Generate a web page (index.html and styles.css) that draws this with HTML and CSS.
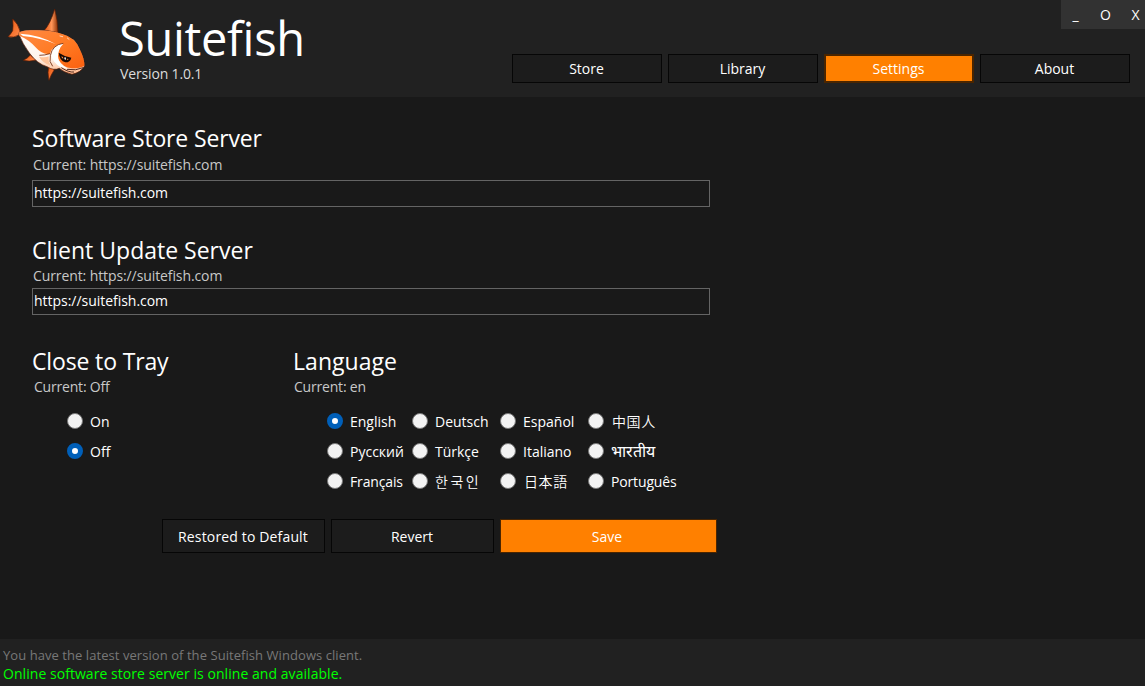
FILE: index.html
```
<!DOCTYPE html>
<html lang="en">
<head>
<meta charset="utf-8">
<title>Suitefish</title>
<link rel="stylesheet" href="styles.css">
</head>
<body>
<header class="header">
  <svg class="logo" viewBox="0 0 300 300" aria-hidden="true">
    <defs>
      <linearGradient id="skin" x1="0" y1="0" x2="1" y2="1"><stop offset="0" stop-color="#ff8a45"/><stop offset=".55" stop-color="#ff7a22"/><stop offset="1" stop-color="#fb6010"/></linearGradient>
      <linearGradient id="fin" x1="0" y1="0" x2="1" y2="0"><stop offset="0" stop-color="#e8560f"/><stop offset=".55" stop-color="#ff9558"/><stop offset="1" stop-color="#8a3005"/></linearGradient>
      <linearGradient id="tail" x1="0" y1="0" x2="1" y2="1"><stop offset="0" stop-color="#e8560f"/><stop offset="1" stop-color="#ff8a4a"/></linearGradient>
      <linearGradient id="belly" x1="0" y1="0" x2="0" y2="1"><stop offset="0" stop-color="#fff"/><stop offset=".65" stop-color="#fff3ea"/><stop offset="1" stop-color="#ffb283"/></linearGradient>
    </defs>
    <g stroke="#5a1a02" stroke-width="2" stroke-linejoin="round">
      <path fill="url(#fin)" d="M132 92Q151 72 164 27Q173 58 174 99Z"/>
      <path fill="url(#tail)" d="M60 93Q55 72 38 57Q40 79 38 92Q32 103 24 110Q42 115 58 104Z"/>
      <path fill="url(#tail)" d="M91 165Q84 174 70 181Q87 186 108 180Z"/>
      <path fill="url(#tail)" d="M147 198Q141 215 147 241Q153 224 163 209Z"/>
      <path fill="url(#belly)" d="M55 99Q66 92 90 91Q150 88 188 103Q226 113 239 148Q254 178 253 199Q242 218 216 223Q191 217 178 205Q161 213 141 200Q112 192 88 159Q68 133 55 99Z"/>
    </g>
    <path fill="url(#skin)" d="M55 98Q66 92 90 91Q150 88 188 103Q226 113 239 148Q254 178 253 197Q240 205 216 205Q188 203 174 176Q169 150 190 130Q158 134 150 161Q128 166 106 141Q87 119 58 107Z"/>
    <path fill="#fff" d="M60 101Q118 104 167 132Q128 115 69 108Z"/>
    <path fill="#fff" d="M190 131Q158 138 154 167Q160 188 180 200L214 211Q186 200 176 181Q169 151 190 131Z"/>
    <path fill="none" stroke="#702505" stroke-width="2.5" d="M118 166Q134 166 150 161M190 130Q157 134 151 167Q146 186 158 199"/>
    <path fill="#ffc49b" d="M117 170Q134 174 146 169Q144 184 151 196Q127 188 117 170Z"/>
    <path fill="#1a0a05" d="M176 158Q194 170 214 173Q211 187 196 187Q179 183 176 158Z"/>
    <path fill="#ff8b3c" d="M184 169l5 2 1 5-4-2zM201 176l5 1-4 4z"/>
    <path fill="#fff" d="M194 171l4 2-1 7-4-3z"/>
    <path fill="none" stroke="#31100a" stroke-width="2.5" d="M184 203Q207 218 222 216M201 208Q228 213 249 203"/>
    <path fill="none" stroke="#fff" stroke-width="2" stroke-linecap="round" d="M180 108l8 2M202 114l5 4"/>
  </svg>
  <div class="brand">
    <h1 class="brand-name">Suitefish</h1>
    <span class="brand-version">Version 1.0.1</span>
  </div>
  <div class="header-end">
    <div class="window-controls"><span>_</span><span>O</span><span>X</span></div>
    <nav class="nav">
      <a class="tab">Store</a>
      <a class="tab">Library</a>
      <a class="tab tab-active">Settings</a>
      <a class="tab">About</a>
    </nav>
  </div>
</header>
<main class="main">
  <section class="server server-store">
    <h2>Software Store Server</h2>
    <p class="current">Current: https://suitefish.com</p>
    <div class="field">https://suitefish.com</div>
  </section>
  <section class="server server-update">
    <h2>Client Update Server</h2>
    <p class="current">Current: https://suitefish.com</p>
    <div class="field">https://suitefish.com</div>
  </section>
  <div class="choices">
    <section class="tray">
      <h2>Close to Tray</h2>
      <p class="current">Current: Off</p>
      <div class="options">
        <label class="option"><i class="radio"></i><span>On</span></label>
        <label class="option"><i class="radio checked"></i><span>Off</span></label>
      </div>
    </section>
    <section class="language">
      <h2>Language</h2>
      <p class="current">Current: en</p>
      <div class="options language-options">
        <label class="option"><i class="radio checked"></i><span>English</span></label>
        <label class="option"><i class="radio"></i><span>Deutsch</span></label>
        <label class="option"><i class="radio"></i><span>Español</span></label>
        <label class="option"><i class="radio"></i><span class="cjk" lang="zh">中国人</span></label>
        <label class="option"><i class="radio"></i><span>Русский</span></label>
        <label class="option"><i class="radio"></i><span>Türkçe</span></label>
        <label class="option"><i class="radio"></i><span>Italiano</span></label>
        <label class="option"><i class="radio"></i><span class="hindi" lang="hi">भारतीय</span></label>
        <label class="option"><i class="radio"></i><span class="tight">Français</span></label>
        <label class="option"><i class="radio"></i><span class="korean" lang="ko">한국인</span></label>
        <label class="option"><i class="radio"></i><span class="cjk" lang="ja">日本語</span></label>
        <label class="option"><i class="radio"></i><span class="tight">Português</span></label>
      </div>
    </section>
  </div>
  <div class="actions">
    <a class="button button-restore">Restored to Default</a>
    <a class="button">Revert</a>
    <a class="button button-save">Save</a>
  </div>
</main>
<footer class="footer">
  <p class="status-version">You have the latest version of the Suitefish Windows client.</p>
  <p class="status-online">Online software store server is online and available.</p>
</footer>
</body>
</html>
```
FILE: styles.css
```
* { box-sizing: border-box; margin: 0; padding: 0; }
body {
  width: 1145px; height: 686px; overflow: hidden;
  display: flex; flex-direction: column;
  background: #191919; color: #fff;
  font: 14px/20px "Open Sans", "Noto Sans CJK SC", sans-serif;
  letter-spacing: 0; white-space: nowrap;
}
h1, h2 { font-weight: 400; }
.header { height: 97px; flex: none; display: flex; background: #212121; }
.logo { width: 100px; height: 100px; flex: none; }
.brand { padding: 12px 0 0 19px; display: flex; flex-direction: column; }
.brand-name { font-size: 47px; line-height: 52px; letter-spacing: -0.3px; }
.brand-version { color: #dcdcdc; line-height: 20px; padding-left: 1px; letter-spacing: -0.15px; }
.header-end { margin-left: auto; display: flex; flex-direction: column; align-items: flex-end; }
.window-controls { width: 84px; height: 29px; background: #323232; display: flex; line-height: 29px; text-align: center; }
.window-controls span { width: 30px; flex: none; padding-right: 1px; }
.nav { display: flex; gap: 6px; padding: 25px 15px 0 0; }
.tab { width: 150px; height: 29px; padding-right: 1px; background: #1c1c1c; border: 1px solid #060606; text-align: center; line-height: 28px; }
.tab-active { background: #ff8000; border: 2px solid #4a2500; line-height: 26px; }
.main { flex: 1; padding: 24px 0 0 32px; }
h2 { font-size: 23px; line-height: 34px; letter-spacing: -0.15px; }
.current { color: #c8c8c8; line-height: 18px; padding-left: 1px; letter-spacing: -0.1px; }
.field { width: 678px; height: 27px; border: 1px solid #646464; padding-left: 1px; line-height: 24px; letter-spacing: -0.03px; }
.server-store { height: 112px; }
.server-store .current { margin-top: 1px; }
.server-store .field { margin-top: 6px; }
.server-update { height: 111px; }
.server-update h2 { letter-spacing: 0; }
.server-update .field { margin-top: 3px; }
.choices { display: flex; }
.tray { width: 261px; }
.language h2 { letter-spacing: 0.05px; }
.choices .current { letter-spacing: -0.2px; }
.tray .current { padding-left: 2px; }
.options { padding: 10px 0 0 34px; }
.tray .options { padding-left: 35px; }
.option { display: flex; align-items: center; height: 30px; gap: 6px; }
.option span { padding-top: 1px; }
.radio { width: 16px; height: 16px; margin-right: 1px; flex: none; border-radius: 50%; background: #f3f3f3; border: 1px solid #777; }
.radio.checked { background: #fff; border: 5px solid #005fb8; }
.language-options { display: grid; grid-template-columns: 85px 88px 88px 100px; }
.tight { letter-spacing: -0.15px; }
.option .cjk { padding: 0 0 0 1px; font-family: "Noto Sans CJK SC", sans-serif; font-weight: 350; letter-spacing: 0.6px; }
.option .korean { padding: 0; font-family: "Noto Sans CJK KR", sans-serif; font-weight: 350; letter-spacing: 2.5px; }
.option .hindi { padding: 0; font-size: 16px; }
.actions { display: flex; gap: 6px; padding: 23px 0 0 130px; }
.button { width: 163px; height: 34px; padding-right: 1px; background: #1c1c1c; border: 1px solid #060606; text-align: center; line-height: 33px; }
.button-restore { letter-spacing: 0.15px; }
.button-save { width: 217px; padding-right: 3px; background: #ff8000; border-color: #4a2500; }
.footer { height: 47px; flex: none; background: #212121; padding: 7px 0 0 3px; line-height: 18px; }
.status-version { color: #787878; font-size: 13px; letter-spacing: 0.06px; }
.status-online { color: #00ff00; letter-spacing: 0.05px; margin-top: 1px; }
```
